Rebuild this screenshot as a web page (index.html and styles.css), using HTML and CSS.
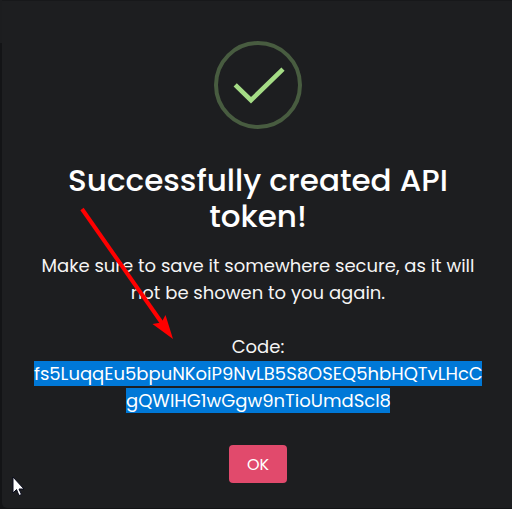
FILE: index.html
```
<!DOCTYPE html>
<html lang="en">
<head>
<meta charset="utf-8">
<title>API token</title>
<link rel="stylesheet" href="styles.css">
</head>
<body>
<main class="dialog">
  <svg class="success" width="88" height="88" viewBox="0 0 88 88" fill="none">
    <circle cx="44" cy="44" r="42" stroke="#485c40" stroke-width="4"/>
    <path d="M21.200 43.800L37 59.200L69 28.200" stroke="#a5dc86" stroke-width="4.600"/>
  </svg>
  <h1 class="title">Successfully created API<br>token!</h1>
  <p class="message">Make sure to save it somewhere secure, as it will<br>not be showen to you again.</p>
  <p class="code">Code:<br><span class="selected c1">fs5LuqqEu5bpuNKoiP9NvLB5S8OSEQ5hbHQTvLHcC</span><br><span class="selected c2">gQWIHG1wGgw9nTioUmdScl8</span></p>
  <button class="confirm">OK</button>
</main>
<svg class="arrow" width="512" height="509" viewBox="0 0 512 509">
  <path d="M82 209L164 326" stroke="#f00" stroke-width="4"/>
  <path d="M173 339L152.500 324L161.500 322.500L165.500 315Z" fill="#f00"/>
</svg>
<svg class="cursor" width="14" height="22" viewBox="0 0 14 22">
  <path d="M1 1V17L4.500 13.500L7 19.500L9.500 18.500L7 13H12Z" fill="#fff" stroke="#090b1c"/>
</svg>
</body>
</html>
```
FILE: styles.css
```
* { box-sizing: border-box; }
body {
  margin: 0;
  height: 509px;
  overflow: hidden;
  background: linear-gradient(#1c1d1f 43px, #131416 43px);
  font-family: Poppins, Inter, "Open Sans", sans-serif;
  color: #f5f5f5;
}
.dialog {
  height: 508px;
  margin-left: 2px;
  padding: 40px 0 0 2px;
  border-top: 1px solid #17181a;
  border-bottom-left-radius: 5px;
  background: #1d1e20;
  display: flex;
  flex-direction: column;
  align-items: center;
}
.success { display: block; flex: none; }
.title {
  margin: 33px 0 0;
  font-size: 31px;
  line-height: 36px;
  font-weight: 500;
  color: #fff;
  text-align: center;
  white-space: nowrap;
}
.message, .code {
  margin: 18px 0 0;
  font-size: 18px;
  line-height: 27px;
  text-align: center;
  white-space: nowrap;
}
.code { margin-top: 27px; }
.selected {
  display: inline-block;
  height: 25px;
  line-height: 25px;
  vertical-align: top;
  margin-top: 1px;
  background: #0078d7;
  color: #fff;
}
.c1 { width: 448px; }
.c2 { width: 264px; }
.confirm {
  width: 58px;
  height: 38px;
  margin: 31px 0 0;
  padding: 0;
  border: 0;
  border-radius: 4px;
  background: #e14a6c;
  color: #fff;
  font: 16px Poppins, Inter, sans-serif;
}
.arrow { position: absolute; left: 0; top: 0; }
.cursor { position: absolute; left: 12px; top: 476px; }
```
